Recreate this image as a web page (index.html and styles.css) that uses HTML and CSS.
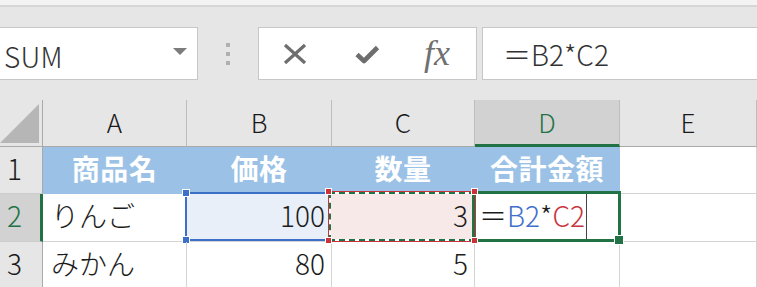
FILE: index.html
```html
<!DOCTYPE html>
<html lang="ja">
<head>
<meta charset="utf-8">
<link rel="stylesheet" href="styles.css">
</head>
<body>
<div class="strip"></div>
<div class="fbar">
  <div class="namebox"><span class="nb-text">SUM</span><span class="nb-arrow"></span></div>
  <div class="dots"><i></i><i></i><i></i></div>
  <div class="btns">
    <svg class="ic-x" width="24" height="22" viewBox="0 0 24 22"><path d="M2 2 L22 20 M22 2 L2 20" stroke="#6e6e6e" stroke-width="3.2" fill="none"/></svg>
    <svg class="ic-ok" width="26" height="22" viewBox="0 0 26 22"><path d="M3 11.5 L10 18 L23.5 4.5" stroke="#6e6e6e" stroke-width="4.6" fill="none" stroke-linejoin="round"/></svg>
    <span class="fx">fx</span>
  </div>
  <div class="finput">＝B2*C2</div>
</div>
<div class="sheet">
  <div class="c corner"><svg width="42" height="46" viewBox="0 0 42 46"><polygon points="0,43 39,43 39,4" fill="#b6b6b6"/></svg></div>
  <div class="c ch">A</div>
  <div class="c ch">B</div>
  <div class="c ch">C</div>
  <div class="c ch sel">D</div>
  <div class="c ch">E</div>

  <div class="c rh">1</div>
  <div class="c hd">商品名</div>
  <div class="c hd">価格</div>
  <div class="c hd">数量</div>
  <div class="c hd">合計金額</div>
  <div class="c"></div>

  <div class="c rh sel">2</div>
  <div class="c txt">りんご</div>
  <div class="c num refb">100<span class="box-b"><i class="hb tl"></i><i class="hb bl"></i></span></div>
  <div class="c num refc"><span class="box-c"></span><span class="val">3</span><i class="hr tl"></i><i class="hr tr"></i><i class="hr bl"></i><i class="hr br"></i></div>
  <div class="c txt active"><span class="edit"><span>＝</span><span class="cb">B2</span><span>*</span><span class="cr">C2</span></span><span class="caret"></span><span class="box-d"><i class="fill"></i></span></div>
  <div class="c"></div>

  <div class="c rh">3</div>
  <div class="c txt">みかん</div>
  <div class="c num">80</div>
  <div class="c num">5</div>
  <div class="c"></div>
  <div class="c"></div>
</div>
</body>
</html>
```
FILE: styles.css
```css
* { box-sizing: border-box; }
html, body { margin: 0; padding: 0; }
body {
  width: 757px;
  height: 287px;
  overflow: hidden;
  background: #ffffff;
  font-family: "Noto Sans CJK JP", "Noto Sans", sans-serif;
  font-weight: 300;
  color: #1c1c1c;
}
.strip {
  height: 7px;
  background: #f3f3f3;
  border-bottom: 2px solid #d6d6d6;
}
.fbar {
  height: 93px;
  background: #e6e6e6;
  display: flex;
  align-items: flex-start;
  padding-top: 20px;
}
.namebox {
  width: 198px;
  height: 53px;
  background: #fff;
  border: 1px solid #c6c6c6;
  border-left: none;
  display: flex;
  align-items: flex-start;
}
.nb-text {
  font-size: 28px;
  line-height: 1;
  color: #333;
  padding-left: 4px;
  margin-top: 14px;
  letter-spacing: 0.3px;
}
.nb-arrow {
  margin-left: auto;
  margin-right: 10px;
  margin-top: 20px;
  width: 0;
  height: 0;
  border-top: 7px solid #7c7c7c;
  border-left: 7px solid transparent;
  border-right: 7px solid transparent;
}
.dots {
  width: 60px;
  height: 53px;
  display: flex;
  flex-direction: column;
  align-items: center;
  padding-top: 16px;
  gap: 5px;
}
.dots i {
  display: block;
  width: 4px;
  height: 4px;
  background: #b0b0b0;
}
.btns {
  width: 219px;
  height: 53px;
  background: #fff;
  border: 1px solid #c6c6c6;
  display: flex;
  align-items: center;
  padding-left: 24px;
}
.ic-x { margin-top: 1px; }
.ic-ok { margin-left: 47px; margin-top: 1px; }
.fx {
  margin-left: 44px;
  font-family: "Liberation Serif", "DejaVu Serif", serif;
  font-style: italic;
  font-size: 36px;
  line-height: 1;
  color: #707070;
  margin-top: -2px;
}
.finput {
  margin-left: 5px;
  flex: 1;
  height: 53px;
  background: #fff;
  border: 1px solid #c6c6c6;
  border-right: none;
  font-size: 28px;
  line-height: 1;
  color: #333;
  padding-left: 20px;
  padding-top: 12px;
}
.sheet {
  display: grid;
  grid-template-columns: 43px 144px 145px 143px 145px 137px;
  grid-template-rows: 47px 47px 48px 48px;
}
.c {
  position: relative;
  border-right: 1px solid #d4d4d4;
  border-bottom: 1px solid #d4d4d4;
  display: flex;
  align-items: center;
  font-size: 28px;
  line-height: 1;
  padding-bottom: 5px;
}
.corner {
  background: #e6e6e6;
  border-right: 1px solid #a9a9a9;
  border-bottom: 1px solid #a9a9a9;
  padding: 0;
  align-items: flex-start;
}
.ch {
  background: #e6e6e6;
  border-right: 1px solid #bdbdbd;
  border-bottom: 1px solid #a9a9a9;
  justify-content: center;
  font-size: 26px;
  color: #1a1a1a;
  padding-bottom: 2px;
}
.ch.sel {
  background: #d2d2d2;
  color: #217346;
  border-bottom: 3px solid #217346;
  padding-top: 2px;
}
.rh {
  background: #e6e6e6;
  border-right: 1px solid #a9a9a9;
  border-bottom: 1px solid #cdcdcd;
  padding-left: 7px;
  color: #1a1a1a;
}
.rh.sel {
  background: #d2d2d2;
  color: #217346;
  border-right: 3px solid #217346;
}
.hd {
  background: #9bc2e6;
  border-color: #9bc2e6;
  color: #ffffff;
  font-weight: bold;
  justify-content: center;
  letter-spacing: 0.5px;
}
.txt { padding-left: 8px; }
.num { justify-content: flex-end; padding-right: 6px; }

.refb { background: #e8eff9; }
.box-b {
  position: absolute;
  left: -2px;
  top: -2px;
  right: 0;
  bottom: 0;
  border: 2px solid #3c70c8;
}
.hb {
  position: absolute;
  width: 8px;
  height: 8px;
  background: #3c70c8;
  border: 1px solid #fff;
}
.hb.tl { left: -5px; top: -5px; }
.hb.bl { left: -5px; bottom: -5px; }

.refc { background: #f8e9e9; }
.refc .val { position: relative; }
.box-c {
  position: absolute;
  left: -3px;
  top: -2px;
  right: -1px;
  bottom: 0;
  border: 2px dashed #217346;
  background: linear-gradient(#f8e9e9, #f8e9e9) padding-box, linear-gradient(#fff, #fff) border-box;
  box-shadow: 0 0 0 1px #c8323a;
}
.hr {
  position: absolute;
  width: 7px;
  height: 7px;
  background: #c8323a;
  border: 1px solid #fff;
  z-index: 2;
}
.hr.tl { left: -7px; top: -6px; }
.hr.tr { right: -4px; top: -6px; }
.hr.bl { left: -7px; bottom: -3px; }
.hr.br { right: -4px; bottom: -3px; }

.active { padding-left: 4px; }
.edit { display: flex; }
.cb { color: #3f70cc; }
.cr { color: #c8363d; }
.caret {
  position: absolute;
  left: 111px;
  top: 0;
  bottom: 1px;
  width: 1px;
  background: #444;
}
.box-d {
  position: absolute;
  left: -3px;
  top: -3px;
  right: -2px;
  bottom: -1px;
  border: 3px solid #217346;
  z-index: 1;
}
.fill {
  position: absolute;
  right: -6px;
  bottom: -6px;
  width: 10px;
  height: 10px;
  background: #217346;
  border: 1px solid #fff;
}
```
